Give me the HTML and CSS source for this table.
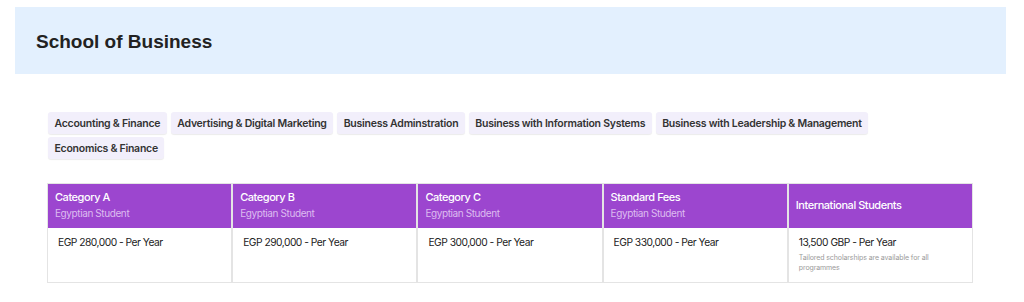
FILE: index.html
```html
<!DOCTYPE html>
<html lang="en">
<head>
<meta charset="utf-8">
<title>School of Business</title>
<link rel="stylesheet" href="styles.css">
</head>
<body>
  <header class="banner">
    <h1 class="title">School of Business</h1>
  </header>
  <div class="tags">
    <span class="tag">Accounting &amp; Finance</span>
    <span class="tag">Advertising &amp; Digital Marketing</span>
    <span class="tag">Business Adminstration</span>
    <span class="tag">Business with Information Systems</span>
    <span class="tag">Business with Leadership &amp; Management</span>
    <span class="tag">Economics &amp; Finance</span>
  </div>
  <div class="fees">
    <div class="col">
      <div class="head"><div class="h-title">Category A</div><div class="h-sub">Egyptian Student</div></div>
      <div class="body"><div class="price">EGP 280,000 - Per Year</div></div>
    </div>
    <div class="col">
      <div class="head"><div class="h-title">Category B</div><div class="h-sub">Egyptian Student</div></div>
      <div class="body"><div class="price">EGP 290,000 - Per Year</div></div>
    </div>
    <div class="col">
      <div class="head"><div class="h-title">Category C</div><div class="h-sub">Egyptian Student</div></div>
      <div class="body"><div class="price">EGP 300,000 - Per Year</div></div>
    </div>
    <div class="col">
      <div class="head"><div class="h-title">Standard Fees</div><div class="h-sub">Egyptian Student</div></div>
      <div class="body"><div class="price">EGP 330,000 - Per Year</div></div>
    </div>
    <div class="col">
      <div class="head head-single"><div class="h-title">International Students</div></div>
      <div class="body"><div class="price">13,500 GBP - Per Year</div><div class="note">Tailored scholarships are available for all programmes</div></div>
    </div>
  </div>
</body>
</html>
```
FILE: styles.css
```css
* { box-sizing: border-box; }
body {
  margin: 0;
  background: #ffffff;
  font-family: Inter, "Liberation Sans", Arial, sans-serif;
  color: #222;
}
.banner {
  margin: 7px 18px 0 15px;
  height: 67px;
  background: #e3f0fe;
  display: flex;
  align-items: center;
  padding: 3px 0 0 21px;
}
.title {
  margin: 0;
  font-family: "Liberation Sans", Arial, sans-serif;
  font-weight: 700;
  font-size: 19px;
  color: #222;
}
.tags {
  margin: 38px 0 0 48px;
  display: flex;
  flex-wrap: wrap;
  gap: 3px 4px;
  max-width: 880px;
}
.tag {
  height: 22px;
  padding: 0 6.5px;
  display: flex;
  align-items: center;
  background: #f2effb;
  border-radius: 3px;
  box-shadow: 0 1px 1px rgba(0,0,0,0.08);
  font-size: 10.5px;
  font-weight: 600;
  color: #333;
  letter-spacing: -0.25px;
}
.fees {
  margin: 24px 0 0 47px;
  width: 926px;
  display: grid;
  grid-template-columns: repeat(5, 1fr);
}
.col {
  border: 1px solid #e4e4e4;
  display: flex;
  flex-direction: column;
}
.head {
  background: #9c46cf;
  height: 44px;
  padding: 5px 7px 7px;
  display: flex;
  flex-direction: column;
  justify-content: center;
}
.h-title {
  font-size: 11px;
  line-height: 16px;
  font-weight: 500;
  color: #ffffff;
  letter-spacing: -0.45px;
}
.h-sub {
  font-size: 10px;
  line-height: 16px;
  color: #dcbcf0;
  letter-spacing: -0.4px;
}
.body {
  height: 54px;
  padding: 7px 10px;
}
.price {
  font-size: 10.25px;
  line-height: 14px;
  color: #222;
  letter-spacing: -0.5px;
}
.note {
  margin-top: 4px;
  font-size: 7px;
  line-height: 9.5px;
  color: #9a9a9a;
  letter-spacing: -0.1px;
}
```
